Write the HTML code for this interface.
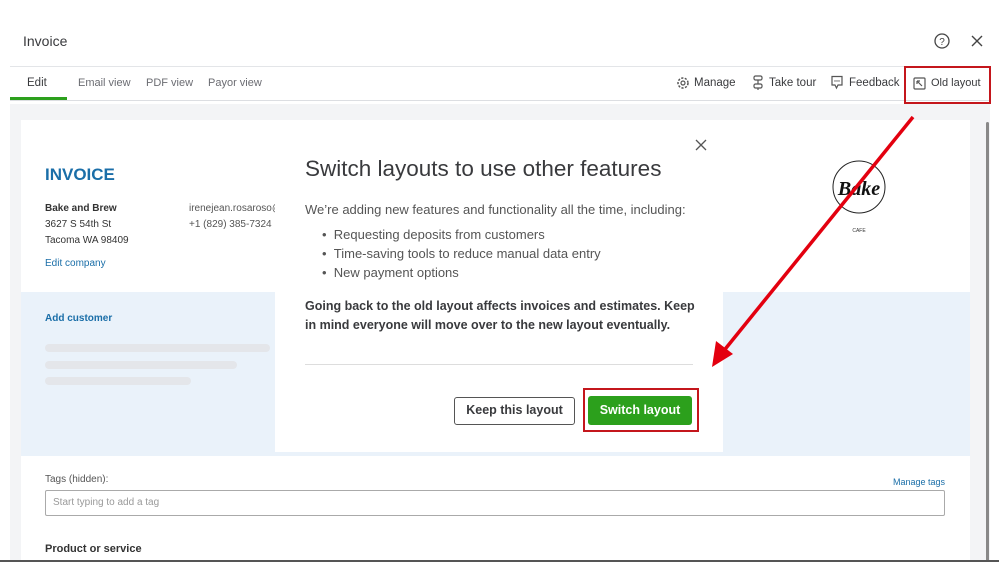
<!DOCTYPE html>
<html><head><style>
*{margin:0;padding:0;box-sizing:border-box}
body{width:999px;height:562px;overflow:hidden;background:#fff;font-family:"Liberation Sans",sans-serif;position:relative;color:#333}
.a{position:absolute}
.n{font-family:"Liberation Sans Narrow","Liberation Sans",sans-serif}
.g{background:#e4e6ea;border-radius:4px;height:8px}
</style></head><body>
<div class="a" style="left:23px;top:33px;font-size:14px;color:#393a3d">Invoice</div>
<svg class="a" style="left:933px;top:32px" width="18" height="18" viewBox="0 0 18 18"><circle cx="9" cy="9" r="7" fill="none" stroke="#444" stroke-width="1.3"/><text x="9" y="13" font-size="10" text-anchor="middle" fill="#444" font-family="Liberation Sans">?</text></svg>
<svg class="a" style="left:970px;top:34px" width="14" height="14" viewBox="0 0 14 14"><path d="M2 2L12 12M12 2L2 12" stroke="#444" stroke-width="1.4"/></svg>
<div class="a" style="left:10px;top:66px;width:980px;height:1px;background:#e3e5e8"></div>
<div class="a" style="left:10px;top:100px;width:980px;height:1px;background:#dcdee2"></div>
<div class="a" style="left:10px;top:97px;width:57px;height:3px;background:#2ca01c"></div>
<div class="a" style="left:27px;top:77px;font-size:11.5px;color:#393a3d">Edit</div>
<div class="a" style="left:78px;top:77px;font-size:11px;color:#6b6c72">Email view</div>
<div class="a" style="left:146px;top:77px;font-size:11px;color:#6b6c72">PDF view</div>
<div class="a" style="left:208px;top:77px;font-size:11px;color:#6b6c72">Payor view</div>
<svg class="a" style="left:676px;top:76px" width="14" height="14" viewBox="0 0 14 14"><circle cx="7" cy="7" r="5" fill="none" stroke="#555" stroke-width="1.5" stroke-dasharray="2.2 1.4"/><circle cx="7" cy="7" r="2" fill="none" stroke="#555" stroke-width="1.2"/></svg>
<div class="a" style="left:694px;top:77px;font-size:11.5px;color:#393a3d">Manage</div>
<svg class="a" style="left:752px;top:75px" width="12" height="16" viewBox="0 0 12 16"><rect x="2" y="1" width="8" height="4" rx="1.5" fill="none" stroke="#555" stroke-width="1.2"/><rect x="2" y="9" width="8" height="4" rx="1.5" fill="none" stroke="#555" stroke-width="1.2"/><path d="M6 5V9M6 13V15" stroke="#555" stroke-width="1.2"/></svg>
<div class="a" style="left:769px;top:77px;font-size:11.5px;color:#393a3d">Take tour</div>
<svg class="a" style="left:830px;top:75px" width="14" height="15" viewBox="0 0 14 15"><path d="M2 1.5H12V10H8L6.5 13L5 10H2Z" fill="none" stroke="#555" stroke-width="1.2"/><circle cx="5" cy="6" r=".7" fill="#555"/><circle cx="7" cy="6" r=".7" fill="#555"/><circle cx="9" cy="6" r=".7" fill="#555"/></svg>
<div class="a" style="left:849px;top:77px;font-size:11.5px;color:#393a3d">Feedback</div>
<svg class="a" style="left:913px;top:77px" width="13" height="13" viewBox="0 0 13 13"><rect x="1" y="1" width="11" height="11" rx="1" fill="none" stroke="#555" stroke-width="1.2"/><path d="M4 4L9 9M4 4H7M4 4V7" stroke="#555" stroke-width="1.2" fill="none"/></svg>
<div class="a" style="left:931px;top:77px;font-size:11px;color:#393a3d">Old layout</div>
<div class="a" style="left:904px;top:66px;width:87px;height:38px;border:2px solid #c4161c"></div>

<div class="a" style="left:10px;top:104px;width:980px;height:458px;background:#f3f4f6"></div>
<div class="a" style="left:21px;top:120px;width:949px;height:442px;background:#fff"></div>
<div class="a" style="left:986px;top:122px;width:3px;height:440px;background:#888;border-radius:2px"></div>
<div class="a" style="left:21px;top:292px;width:949px;height:164px;background:#eaf2fa"></div>
<div class="a" style="left:45px;top:165px;font-size:17px;font-weight:bold;color:#1a6ea8">INVOICE</div>
<div class="a n" style="left:45px;top:201px;font-size:10px;line-height:16px;color:#333"><b>Bake and Brew</b><br>3627 S 54th St<br>Tacoma WA 98409</div>
<div class="a n" style="left:189px;top:201px;font-size:10px;line-height:16px;color:#555">irenejean.rosaroso@c<br>+1 (829) 385-7324</div>
<div class="a n" style="left:45px;top:258px;font-size:10px;color:#1a6ea8">Edit company</div>
<div class="a n" style="left:45px;top:313px;font-size:10px;font-weight:bold;color:#1a6ea8">Add customer</div>
<div class="a g" style="left:45px;top:344px;width:225px"></div>
<div class="a g" style="left:45px;top:361px;width:192px"></div>
<div class="a g" style="left:45px;top:377px;width:146px"></div>
<svg class="a" style="left:830px;top:153px" width="60" height="82" viewBox="0 0 60 82"><circle cx="29" cy="34" r="26" fill="none" stroke="#222" stroke-width="1"/><text x="29" y="42" font-size="20" font-style="italic" font-weight="bold" text-anchor="middle" fill="#111" font-family="Liberation Serif">Bake</text><text x="29" y="79" font-size="5" text-anchor="middle" fill="#333">CAFE</text></svg>
<div class="a n" style="left:45px;top:474px;font-size:10px;color:#555">Tags (hidden):</div>
<div class="a n" style="left:945px;top:477px;font-size:9px;color:#1a6ea8;transform:translateX(-100%);white-space:nowrap">Manage tags</div>
<div class="a" style="left:45px;top:490px;width:900px;height:26px;border:1px solid #aaa;border-radius:2px"></div>
<div class="a n" style="left:53px;top:497px;font-size:10px;color:#999">Start typing to add a tag</div>
<div class="a n" style="left:45px;top:543px;font-size:11px;font-weight:bold;color:#333">Product or service</div>
<div class="a" style="left:0;top:560px;width:999px;height:2px;background:#555"></div>

<div class="a" style="left:275px;top:120px;width:448px;height:332px;background:#fff"></div>
<svg class="a" style="left:695px;top:139px" width="12" height="12" viewBox="0 0 12 12"><path d="M1 1L11 11M11 1L1 11" stroke="#555" stroke-width="1.3"/></svg>
<div class="a" style="left:305px;top:156px;font-size:22.5px;color:#393a3d;white-space:nowrap">Switch layouts to use other features</div>
<div class="a" style="left:305px;top:202px;font-size:13px;color:#555;white-space:nowrap">We’re adding new features and functionality all the time, including:</div>
<div class="a" style="left:322px;top:225px;font-size:13px;line-height:19px;color:#555">•&nbsp;&nbsp;Requesting deposits from customers<br>•&nbsp;&nbsp;Time-saving tools to reduce manual data entry<br>•&nbsp;&nbsp;New payment options</div>
<div class="a" style="left:305px;top:297px;width:400px;font-size:12.5px;line-height:19px;font-weight:bold;color:#393a3d">Going back to the old layout affects invoices and estimates. Keep in mind everyone will move over to the new layout eventually.</div>
<div class="a" style="left:305px;top:364px;width:388px;height:1px;background:#ddd"></div>
<div class="a" style="left:454px;top:397px;width:121px;height:28px;border:1.5px solid #555;border-radius:3px;font-size:12.5px;font-weight:bold;color:#393a3d;text-align:center;line-height:25px">Keep this layout</div>
<div class="a" style="left:588px;top:396px;width:104px;height:29px;background:#2ca01c;border-radius:3px;font-size:12.5px;font-weight:bold;color:#fff;text-align:center;line-height:29px">Switch layout</div>
<div class="a" style="left:583px;top:388px;width:116px;height:44px;border:2px solid #c4161c"></div>
<svg class="a" style="left:0;top:0" width="999" height="562"><path d="M913 117L722 353" stroke="#e3000f" stroke-width="3.5"/><path d="M712 367L716 341L733 354Z" fill="#e3000f"/></svg>
</body></html>
